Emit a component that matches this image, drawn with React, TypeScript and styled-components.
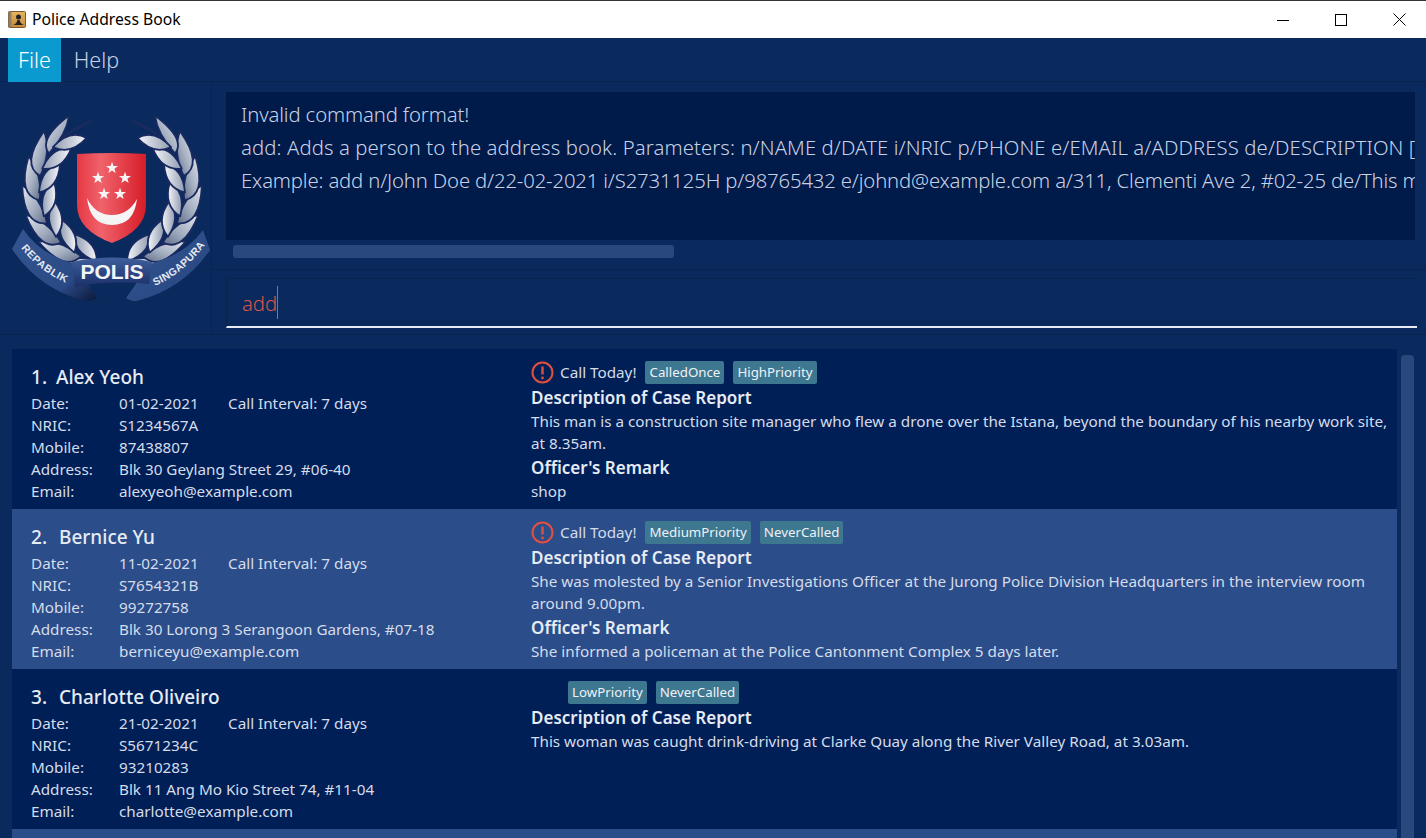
import React from "react";
import styled, { createGlobalStyle } from "styled-components";

const UI_FONT = `"Noto Sans", "Open Sans", "Liberation Sans", sans-serif`;

const GlobalStyle = createGlobalStyle`
  html, body {
    margin: 0;
    padding: 0;
    height: 100%;
    overflow: hidden;
    background: #0a2a5e;
  }
  * {
    box-sizing: border-box;
  }
`;

const Window = styled.div`
  width: 1426px;
  height: 838px;
  display: flex;
  flex-direction: column;
  overflow: hidden;
  background: #0a2a5e;
  font-family: ${UI_FONT};
`;

const TitleBar = styled.div`
  height: 38px;
  flex: none;
  display: flex;
  align-items: center;
  background: #fff;
  border-top: 1px solid #333;
  padding-left: 8px;
`;

const TitleText = styled.span`
  margin-left: 6px;
  padding-bottom: 2px;
  font-size: 15.7px;
  color: #000;
  flex: 1;
`;

const WindowButton = styled.div`
  width: 58px;
  height: 37px;
  margin-left: 2px;
  margin-right: -2px;
  display: flex;
  align-items: center;
  justify-content: center;
`;

const MenuBar = styled.div`
  height: 44px;
  flex: none;
  display: flex;
  padding-left: 8px;
  background: #0a2a5e;
  border-bottom: 1px solid #08244f;
`;

const MenuItem = styled.div<{ $active?: boolean }>`
  height: 44px;
  padding: 0 10px 2px 10px;
  margin-right: 3px;
  display: flex;
  align-items: center;
  font-size: 21.5px;
  font-weight: 300;
  color: ${(p) => (p.$active ? "#ffffff" : "#c8d2e4")};
  background: ${(p) => (p.$active ? "#0a9ad0" : "transparent")};
`;

const TopSection = styled.div`
  height: 253px;
  flex: none;
  display: grid;
  grid-template-columns: 212px 1fr;
  border-bottom: 1px solid #08244f;
`;

const LogoPanel = styled.div`
  border-right: 1px solid #08244f;
  display: flex;
  align-items: flex-start;
  padding: 34px 0 0 11px;
`;

const Consoles = styled.div`
  display: flex;
  flex-direction: column;
  min-width: 0;
`;

const ResultPanel = styled.div`
  height: 188px;
  flex: none;
  padding: 10px 11px 8px 14px;
  border-bottom: 1px solid #08244f;
  display: flex;
  flex-direction: column;
`;

const ResultBox = styled.div`
  height: 148px;
  flex: none;
  overflow: hidden;
  background: #001a4a;
  padding: 6px 0 0 15px;
  color: #c8d2e4;
  font-size: 20.3px;
  font-weight: 300;
  line-height: 33px;
  white-space: nowrap;
`;

const ResultLine = styled.div<{ $tracking: number }>`
  letter-spacing: ${(p) => p.$tracking}px;
`;

const HScrollTrack = styled.div`
  flex: 1;
  padding: 5px 7px;
`;

const HScrollThumb = styled.div`
  width: 441px;
  height: 13px;
  border-radius: 3px;
  background: #28487e;
`;

const CommandPanel = styled.div`
  flex: 1;
  padding: 8px 9px 7px 14px;
`;

const CommandBox = styled.div`
  height: 50px;
  border-top: 1px solid #08244f;
  border-left: 1px solid #08244f;
  border-bottom: 2px solid #e8edf5;
  padding-left: 15px;
  display: flex;
  align-items: center;
  color: #d9534a;
  font-size: 20.3px;
  font-weight: 300;
`;

const Caret = styled.span`
  width: 1px;
  height: 33px;
  background: #d9534a;
`;

const ListSection = styled.div`
  flex: 1;
  min-height: 0;
  display: flex;
  padding: 14px 0 0 12px;
  overflow: hidden;
`;

const CardList = styled.div`
  width: 1385px;
  flex: none;
  display: flex;
  flex-direction: column;
`;

const Card = styled.div<{ $selected?: boolean }>`
  height: 160px;
  flex: none;
  display: grid;
  grid-template-columns: 519px 1fr;
  background: ${(p) => (p.$selected ? "#2b4d8a" : "#001f57")};
  color: #d5dcea;
  font-size: 15.25px;
  line-height: 22px;
`;

const Identity = styled.div`
  padding: 14px 0 0 19px;
`;

const Name = styled.div`
  display: flex;
  font-size: 19px;
  font-weight: 500;
  color: #e6ebf4;
  line-height: 28px;
  margin-bottom: 1px;
`;

const NameIndex = styled.span<{ $narrow?: boolean }>`
  width: ${(p) => (p.$narrow ? "25px" : "28px")};
  flex: none;
`;

const DetailRow = styled.div`
  display: flex;
  white-space: nowrap;
`;

const DetailLabel = styled.span`
  width: 88px;
  flex: none;
`;

const DetailValue = styled.span`
  width: 109px;
  flex: none;
`;

const Report = styled.div`
  padding: 11px 6px 0 0;
`;

const StatusRow = styled.div`
  height: 24px;
  display: flex;
  align-items: center;
`;

const AlertIcon = styled.svg`
  width: 23px;
  height: 23px;
  flex: none;
  margin-right: 6px;
`;

const CallToday = styled.span`
  margin-right: 9px;
  padding-bottom: 1px;
`;

const NoCallSpace = styled.span`
  width: 37px;
  flex: none;
`;

const Tag = styled.span`
  height: 23px;
  padding: 0 4px;
  margin-right: 9px;
  display: flex;
  align-items: center;
  border-radius: 2px;
  background: #3e7790;
  color: #eef2f7;
  font-size: 13.3px;
`;

const SectionTitle = styled.div`
  font-size: 17px;
  font-weight: 600;
  color: #e6ebf4;
  line-height: 25px;
  margin-top: 1px;
`;

const ListScrollbar = styled.div`
  flex: 1;
  padding: 6px 0 0 4px;
`;

const ListThumb = styled.div`
  width: 13px;
  height: 700px;
  border-radius: 4px;
  background: #28487e;
`;

/* wreath leaves, worked out along an arc round the shield */
const polar = (r: number, deg: number) => {
  const a = (deg * Math.PI) / 180;
  return [112 + r * Math.cos(a), 190 + r * Math.sin(a)];
};

const leafPath = (a: number, out: number, span: number) => {
  const [sx, sy] = polar(73, a);
  const [ex, ey] = polar(73 + out, a + span);
  const [c1x, c1y] = polar(73 + out * 1.3, a + span * 0.15);
  const [c2x, c2y] = polar(73 - out * 0.1, a + span * 0.7);
  return `M${sx.toFixed(1)} ${sy.toFixed(1)} Q${c1x.toFixed(1)} ${c1y.toFixed(1)} ${ex.toFixed(1)} ${ey.toFixed(1)} Q${c2x.toFixed(1)} ${c2y.toFixed(1)} ${sx.toFixed(1)} ${sy.toFixed(1)}Z`;
};

const LEAF_ANGLES = [96, 115, 134, 153, 172, 191, 210];

const Wreath: React.FC = () => (
  <g stroke="#1a2a60" strokeWidth="1.8" strokeLinejoin="round">
    {LEAF_ANGLES.map((a) => (
      <React.Fragment key={a}>
        <path d={leafPath(a, a === 210 ? 13 : 17, 30)} fill="url(#leafOuter)" />
        <path d={leafPath(a + 6, -15, 28)} fill="url(#leafInner)" />
      </React.Fragment>
    ))}
    <path d={leafPath(226, -1, 28)} fill="url(#leafInner)" />
  </g>
);

const Star: React.FC<{ x: number; y: number }> = ({ x, y }) => {
  const pts = Array.from({ length: 10 }, (_, i) => {
    const r = i % 2 === 0 ? 6.3 : 2.5;
    const a = (-90 + i * 36) * (Math.PI / 180);
    return `${(x + r * Math.cos(a)).toFixed(1)},${(y + r * Math.sin(a)).toFixed(1)}`;
  });
  return <polygon points={pts.join(" ")} fill="#f6f6f6" />;
};

const PoliceLogo: React.FC = () => (
  <svg width="200" height="190" viewBox="11 116 200 190" fontFamily={`"Liberation Sans", sans-serif`}>
    <defs>
      <linearGradient id="leafOuter" x1="0" y1="0" x2="1" y2="1">
        <stop offset="0" stopColor="#e4e8ef" />
        <stop offset="0.55" stopColor="#a3aec0" />
        <stop offset="1" stopColor="#5f6e88" />
      </linearGradient>
      <linearGradient id="leafInner" x1="0" y1="0" x2="1" y2="0">
        <stop offset="0" stopColor="#8e9bb0" />
        <stop offset="1" stopColor="#f6f7fa" />
      </linearGradient>
      <linearGradient id="shieldFill" x1="0" y1="0" x2="1" y2="0">
        <stop offset="0" stopColor="#e53844" />
        <stop offset="0.35" stopColor="#f0636b" />
        <stop offset="1" stopColor="#d61c28" />
      </linearGradient>
      <linearGradient id="ribbonFill" x1="0" y1="0" x2="0" y2="1">
        <stop offset="0" stopColor="#3d5f9c" />
        <stop offset="1" stopColor="#1b2f68" />
      </linearGradient>
      <linearGradient id="ribbonSide" x1="0" y1="0" x2="1" y2="1">
        <stop offset="0" stopColor="#345590" />
        <stop offset="0.7" stopColor="#2a4a86" />
        <stop offset="1" stopColor="#0c1738" />
      </linearGradient>
      <path id="ribbonLeftText" d="M21 248 Q38 270 66 283" />
      <path id="ribbonRightText" d="M155 286 Q186 272 207 242" />
    </defs>
    <Wreath />
    <g transform="matrix(-1 0 0 1 224 0)">
      <Wreath />
    </g>
    <path d="M77 154 Q112 152 146 154 L146 205 Q146 230 112 243 Q77 230 77 205Z" fill="url(#shieldFill)" />
    <Star x={112} y={168} />
    <Star x={98} y={178} />
    <Star x={125} y={178} />
    <Star x={104} y={194} />
    <Star x={120} y={194} />
    <path d="M87 198 Q90 225 112 225 Q134 225 137 199 Q128 215 112 215 Q95 215 87 198Z" fill="#f4f4f4" />
    <path d="M23 229 Q40 255 76 264 L97 298 Q90 303 82 300 Q38 288 12 249Z" fill="url(#ribbonSide)" />
    <path d="M203 230 Q186 254 150 264 L126 298 Q133 303 140 300 Q184 288 210 250Z" fill="url(#ribbonSide)" />
    <path d="M72 262 Q112 253 152 262 L149 284 Q112 280 75 287Z" fill="url(#ribbonFill)" />
    <text x="112" y="279" textAnchor="middle" fontSize="21" fontWeight="700" fill="#f2f4f8">
      POLIS
    </text>
    <text fontSize="10.5" fontWeight="700" fill="#e5e9f1" letterSpacing="0.6">
      <textPath href="#ribbonLeftText">REPABLIK</textPath>
    </text>
    <text fontSize="10.5" fontWeight="700" fill="#e5e9f1" letterSpacing="0.3">
      <textPath href="#ribbonRightText">SINGAPURA</textPath>
    </text>
  </svg>
);

const AppIcon: React.FC = () => (
  <svg width="18" height="17" viewBox="0 0 18 17">
    <defs>
      <linearGradient id="bookFill" x1="0" y1="0" x2="0" y2="1">
        <stop offset="0" stopColor="#e8b45e" />
        <stop offset="1" stopColor="#c48a3c" />
      </linearGradient>
    </defs>
    <rect x="0.5" y="0.5" width="17" height="16" rx="1" fill="url(#bookFill)" stroke="#7a5a2c" />
    <rect x="0.5" y="0.5" width="3" height="16" fill="#8d8068" />
    <circle cx="10.5" cy="6" r="2.5" fill="#222" />
    <path d="M5 14 Q9 12.5 9.4 9 L11.6 9 Q12 12.5 16 14Z" fill="#222" />
  </svg>
);

const Alert: React.FC = () => (
  <AlertIcon viewBox="0 0 23 23">
    <circle cx="11.5" cy="11.5" r="10" fill="none" stroke="#e0503f" strokeWidth="2" />
    <path d="M11.5 5.5V13.5" stroke="#e0503f" strokeWidth="2.4" />
    <circle cx="11.5" cy="17" r="1.4" fill="#e0503f" />
  </AlertIcon>
);

type Person = {
  index: number;
  name: string;
  date: string;
  nric: string;
  mobile: string;
  address: string;
  email: string;
  callToday: boolean;
  tags: string[];
  description: string;
  remark?: string;
};

const PEOPLE: Person[] = [
  {
    index: 1,
    name: "Alex Yeoh",
    date: "01-02-2021",
    nric: "S1234567A",
    mobile: "87438807",
    address: "Blk 30 Geylang Street 29, #06-40",
    email: "alexyeoh@example.com",
    callToday: true,
    tags: ["CalledOnce", "HighPriority"],
    description:
      "This man is a construction site manager who flew a drone over the Istana, beyond the boundary of his nearby work site, at 8.35am.",
    remark: "shop",
  },
  {
    index: 2,
    name: "Bernice Yu",
    date: "11-02-2021",
    nric: "S7654321B",
    mobile: "99272758",
    address: "Blk 30 Lorong 3 Serangoon Gardens, #07-18",
    email: "berniceyu@example.com",
    callToday: true,
    tags: ["MediumPriority", "NeverCalled"],
    description:
      "She was molested by a Senior Investigations Officer at the Jurong Police Division Headquarters in the interview room around 9.00pm.",
    remark: "She informed a policeman at the Police Cantonment Complex 5 days later.",
  },
  {
    index: 3,
    name: "Charlotte Oliveiro",
    date: "21-02-2021",
    nric: "S5671234C",
    mobile: "93210283",
    address: "Blk 11 Ang Mo Kio Street 74, #11-04",
    email: "charlotte@example.com",
    callToday: false,
    tags: ["LowPriority", "NeverCalled"],
    description: "This woman was caught drink-driving at Clarke Quay along the River Valley Road, at 3.03am.",
  },
];

const PersonCard: React.FC<{ person: Person; selected?: boolean }> = ({ person, selected }) => (
  <Card $selected={selected}>
    <Identity>
      <Name>
        <NameIndex $narrow={person.index === 1}>{person.index}.</NameIndex>
        {person.name}
      </Name>
      <DetailRow>
        <DetailLabel>Date:</DetailLabel>
        <DetailValue>{person.date}</DetailValue>
        <span>Call Interval: 7 days</span>
      </DetailRow>
      <DetailRow>
        <DetailLabel>NRIC:</DetailLabel>
        <span>{person.nric}</span>
      </DetailRow>
      <DetailRow>
        <DetailLabel>Mobile:</DetailLabel>
        <span>{person.mobile}</span>
      </DetailRow>
      <DetailRow>
        <DetailLabel>Address:</DetailLabel>
        <span>{person.address}</span>
      </DetailRow>
      <DetailRow>
        <DetailLabel>Email:</DetailLabel>
        <span>{person.email}</span>
      </DetailRow>
    </Identity>
    <Report>
      <StatusRow>
        {person.callToday ? (
          <>
            <Alert />
            <CallToday>Call Today!</CallToday>
          </>
        ) : (
          <NoCallSpace />
        )}
        {person.tags.map((t) => (
          <Tag key={t}>{t}</Tag>
        ))}
      </StatusRow>
      <SectionTitle>Description of Case Report</SectionTitle>
      <div>{person.description}</div>
      {person.remark && (
        <>
          <SectionTitle>Officer's Remark</SectionTitle>
          <div>{person.remark}</div>
        </>
      )}
    </Report>
  </Card>
);

const App: React.FC = () => (
  <Window>
    <GlobalStyle />
    <TitleBar>
      <AppIcon />
      <TitleText>Police Address Book</TitleText>
      <WindowButton>
        <svg width="12" height="12" viewBox="0 0 12 12">
          <path d="M0 6.5H12" stroke="#000" />
        </svg>
      </WindowButton>
      <WindowButton>
        <svg width="12" height="12" viewBox="0 0 12 12">
          <rect x="0.5" y="0.5" width="11" height="11" fill="none" stroke="#000" />
        </svg>
      </WindowButton>
      <WindowButton>
        <svg width="13" height="13" viewBox="0 0 13 13">
          <path d="M0.5 0.5L12.5 12.5M12.5 0.5L0.5 12.5" stroke="#000" />
        </svg>
      </WindowButton>
    </TitleBar>
    <MenuBar>
      <MenuItem $active>File</MenuItem>
      <MenuItem>Help</MenuItem>
    </MenuBar>
    <TopSection>
      <LogoPanel>
        <PoliceLogo />
      </LogoPanel>
      <Consoles>
        <ResultPanel>
          <ResultBox>
            <ResultLine $tracking={-0.13}>Invalid command format!</ResultLine>
            <ResultLine $tracking={0.11}>
              add: Adds a person to the address book. Parameters: n/NAME d/DATE i/NRIC p/PHONE e/EMAIL a/ADDRESS
              de/DESCRIPTION [r/REMARK] [t/TAG]...
            </ResultLine>
            <ResultLine $tracking={-0.15}>
              Example: add n/John Doe d/22-02-2021 i/S2731125H p/98765432 e/johnd@example.com a/311, Clementi Ave 2,
              #02-25 de/This man is a suspect
            </ResultLine>
          </ResultBox>
          <HScrollTrack>
            <HScrollThumb />
          </HScrollTrack>
        </ResultPanel>
        <CommandPanel>
          <CommandBox>
            add
            <Caret />
          </CommandBox>
        </CommandPanel>
      </Consoles>
    </TopSection>
    <ListSection>
      <CardList>
        {PEOPLE.map((p) => (
          <PersonCard key={p.index} person={p} selected={p.index === 2} />
        ))}
        <Card $selected />
      </CardList>
      <ListScrollbar>
        <ListThumb />
      </ListScrollbar>
    </ListSection>
  </Window>
);

export default App;
